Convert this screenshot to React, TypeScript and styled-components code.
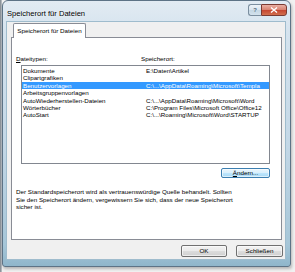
import React from "react";
import styled, { createGlobalStyle } from "styled-components";

const Global = createGlobalStyle`
  html, body { margin: 0; padding: 0; }
  body {
    width: 295px;
    height: 272px;
    overflow: hidden;
    background: linear-gradient(to right, #7f868d 0, #9aa1a8 1px, #c9ced3 2px, #f1f1f1 2px);
    font-family: "Liberation Sans", Arial, sans-serif;
  }
`;

const Window = styled.div`
  box-sizing: border-box;
  margin-left: 2px;
  width: 289px;
  height: 267px;
  border: 1px solid #5d7386;
  border-radius: 6px 6px 3px 3px;
  background: linear-gradient(to bottom, #e2ebf3 0%, #d5e3ee 12%, #c3d7e6 55%, #a6c6d8 92%, #8fb6cb 100%);
  padding: 0 5px 7px 4px;
  display: flex;
  flex-direction: column;
  box-shadow: 1px 2px 3px rgba(0, 0, 0, 0.25);
`;

const TitleBar = styled.div`
  height: 21px;
  display: flex;
  align-items: flex-start;
  justify-content: space-between;
`;

const TitleText = styled.div`
  margin-top: 8px;
  font-size: 7.6px;
  line-height: 9px;
  color: #000;
  text-shadow: 0 0 3px rgba(255, 255, 255, 0.9);
  white-space: nowrap;
`;

const CaptionGroup = styled.div`
  display: flex;
  margin-top: 3px;
  margin-right: -2px;
`;

const HelpButton = styled.div`
  box-sizing: border-box;
  width: 13px;
  height: 12px;
  border: 1px solid #7b8e9f;
  border-right: none;
  border-radius: 3px 0 0 3px;
  background: linear-gradient(#eef3f8 0%, #d7e3ed 50%, #c4d6e4 50%, #d3e2ec 100%);
  display: flex;
  align-items: center;
  justify-content: center;
  font-size: 6px;
  font-weight: bold;
  color: #5a6d7e;
`;

const CloseButton = styled.div`
  box-sizing: border-box;
  width: 26px;
  height: 12px;
  border: 1px solid #7a3b33;
  border-radius: 0 3px 3px 0;
  background: linear-gradient(#eab0a4 0%, #d8806e 50%, #c5442f 50%, #d2704f 100%);
  display: flex;
  align-items: center;
  justify-content: center;
`;

const Client = styled.div`
  flex: 1;
  background: #f0f0f0;
  box-shadow: 0 0 0 1px #9fbccd;
  display: flex;
  flex-direction: column;
`;

const TabStrip = styled.div`
  box-sizing: border-box;
  height: 15px;
  padding: 1px 0 0 6px;
  display: flex;
  align-items: flex-start;
`;

const Tab = styled.div`
  box-sizing: border-box;
  position: relative;
  z-index: 1;
  width: 73px;
  height: 15px;
  border: 1px solid #898c95;
  border-bottom: none;
  border-radius: 2px 2px 0 0;
  background: #fff;
  font-size: 6.25px;
  line-height: 13px;
  text-align: center;
  color: #000;
  white-space: nowrap;
`;

const Panel = styled.div`
  box-sizing: border-box;
  margin: 0 3px 0 4px;
  height: 203px;
  background: #fff;
  border: 1px solid #898c95;
  padding: 17px 11px 0 4px;
  display: flex;
  flex-direction: column;
`;

const LabelRow = styled.div`
  display: grid;
  grid-template-columns: 125px 1fr;
  font-size: 6.25px;
  line-height: 8px;
  color: #000;
  white-space: nowrap;
`;

const List = styled.div`
  box-sizing: border-box;
  margin: 2px 0 0 5px;
  height: 99px;
  border: 1px solid #828790;
  padding-top: 1px;
  background: #fff;
  overflow: hidden;
`;

const Row = styled.div<{ $selected?: boolean }>`
  display: grid;
  grid-template-columns: 123px 1fr;
  padding-left: 1px;
  height: 7.4px;
  font-size: 6.2px;
  line-height: 7.4px;
  white-space: nowrap;
  color: ${(p) => (p.$selected ? "#fff" : "#000")};
  background: ${(p) => (p.$selected ? "#3399ff" : "transparent")};
`;

const Cell = styled.span``;

const ChangeRow = styled.div`
  display: flex;
  justify-content: flex-end;
  margin-top: 4px;
`;

const Button = styled.button<{ $focused?: boolean; $w: number }>`
  box-sizing: border-box;
  width: ${(p) => p.$w}px;
  height: ${(p) => (p.$focused ? 10 : 12)}px;
  padding: 0;
  margin: 0;
  font-family: "Liberation Sans", Arial, sans-serif;
  font-size: 6.25px;
  line-height: 8px;
  color: #000;
  border: 1px solid ${(p) => (p.$focused ? "#3c7fb1" : "#707070")};
  border-radius: 2px;
  background: ${(p) =>
    p.$focused
      ? "linear-gradient(#eaf6fd 0%, #d9f0fc 50%, #bee6fd 50%, #a7d9f5 100%)"
      : "linear-gradient(#f2f2f2 0%, #ebebeb 50%, #dddddd 50%, #cfcfcf 100%)"};
  box-shadow: inset 0 0 0 1px rgba(255, 255, 255, 0.6);
`;

const Description = styled.div`
  margin-top: 10px;
  font-size: 6.25px;
  line-height: 7.5px;
  color: #000;
  white-space: nowrap;
`;

const ButtonRow = styled.div`
  display: flex;
  justify-content: flex-end;
  gap: 9px;
  margin-top: 5px;
  padding-right: 2px;
`;

const rows: [string, string][] = [
  ["Dokumente", "E:\\Daten\\Artikel"],
  ["Clipartgrafiken", ""],
  ["Benutzervorlagen", "C:\\...\\AppData\\Roaming\\Microsoft\\Templa"],
  ["Arbeitsgruppenvorlagen", ""],
  ["AutoWiederherstellen-Dateien", "C:\\...\\AppData\\Roaming\\Microsoft\\Word"],
  ["Wörterbücher", "C:\\Program Files\\Microsoft Office\\Office12"],
  ["AutoStart", "C:\\...\\Roaming\\Microsoft\\Word\\STARTUP"],
];

export default function App() {
  return (
    <>
      <Global />
      <Window>
        <TitleBar>
          <TitleText>Speicherort für Dateien</TitleText>
          <CaptionGroup>
            <HelpButton>?</HelpButton>
            <CloseButton>
              <svg width="8" height="6" viewBox="0 0 8 6">
                <path d="M1 0.5 L7 5.5 M7 0.5 L1 5.5" stroke="#fff" strokeWidth="1.4" />
              </svg>
            </CloseButton>
          </CaptionGroup>
        </TitleBar>
        <Client>
          <TabStrip>
            <Tab>Speicherort für Dateien</Tab>
          </TabStrip>
          <Panel>
            <LabelRow>
              <span>
                <u>D</u>ateitypen:
              </span>
              <span>Speicherort:</span>
            </LabelRow>
            <List>
              {rows.map(([name, path], i) => (
                <Row key={name} $selected={i === 2}>
                  <Cell>{name}</Cell>
                  <Cell>{path}</Cell>
                </Row>
              ))}
            </List>
            <ChangeRow>
              <Button $focused $w={49}>
                <u>Ä</u>ndern...
              </Button>
            </ChangeRow>
            <Description>
              Der Standardspeicherort wird als vertrauenswürdige Quelle behandelt. Sollten
              <br />
              Sie den Speicherort ändern, vergewissern Sie sich, dass der neue Speicherort
              <br />
              sicher ist.
            </Description>
          </Panel>
          <ButtonRow>
            <Button $w={46}>OK</Button>
            <Button $w={47}>Schließen</Button>
          </ButtonRow>
        </Client>
      </Window>
    </>
  );
}
